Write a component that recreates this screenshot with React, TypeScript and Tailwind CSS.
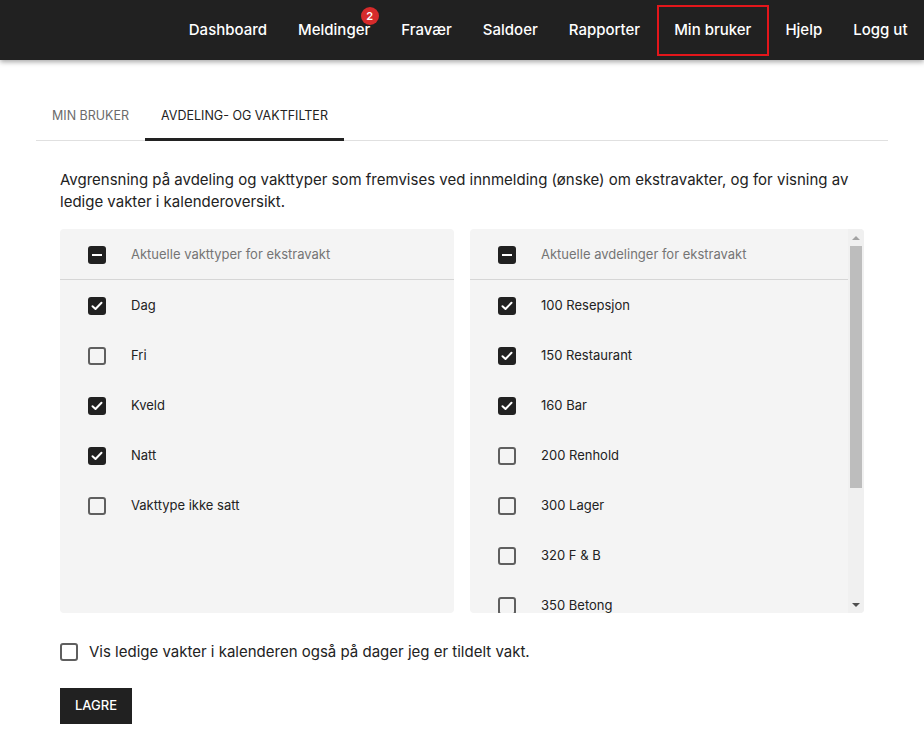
import React from 'react';

const navItems = ['Dashboard', 'Meldinger', 'Fravær', 'Saldoer', 'Rapporter', 'Min bruker', 'Hjelp', 'Logg ut'];

const vakttyper = [
  { label: 'Dag', checked: true },
  { label: 'Fri', checked: false },
  { label: 'Kveld', checked: true },
  { label: 'Natt', checked: true },
  { label: 'Vakttype ikke satt', checked: false },
];

const avdelinger = [
  { label: '100 Resepsjon', checked: true },
  { label: '150 Restaurant', checked: true },
  { label: '160 Bar', checked: true },
  { label: '200 Renhold', checked: false },
  { label: '300 Lager', checked: false },
  { label: '320 F & B', checked: false },
  { label: '350 Betong', checked: false },
  { label: '400 Vedlikehold', checked: false },
  { label: '500 Administrasjon', checked: false },
  { label: '600 Konferanse', checked: false },
];

function Checkbox({ state, white }: { state: 'checked' | 'unchecked' | 'indeterminate'; white?: boolean }) {
  if (state === 'unchecked') {
    return <span className={`block w-[18px] h-[18px] rounded-[3px] border-2 border-[#5f5f5f] shrink-0 ${white ? 'bg-white' : ''}`} />;
  }
  return (
    <span className="flex items-center justify-center w-[18px] h-[18px] rounded-[3px] bg-[#212121] shrink-0">
      {state === 'checked' ? (
        <svg width="12" height="10" viewBox="0 0 12 10" fill="none">
          <path d="M1.5 5.2 L4.5 8 L10.5 1.8" stroke="white" strokeWidth="2" strokeLinecap="round" strokeLinejoin="round" />
        </svg>
      ) : (
        <span className="block w-[10px] h-[2px] bg-white" />
      )}
    </span>
  );
}

function FilterList({ title, items }: { title: string; items: { label: string; checked: boolean }[] }) {
  return (
    <div>
      <div className="flex items-center h-[51px] pt-[2px] pl-7 gap-[25px] border-b border-[#d6d6d6]">
        <Checkbox state="indeterminate" />
        <span className="text-[13px] text-[#757575]">{title}</span>
      </div>
      <div>
        {items.map(item => (
          <div key={item.label} className="flex items-center h-[50px] pt-[2px] pl-7 gap-[25px]">
            <Checkbox state={item.checked ? 'checked' : 'unchecked'} />
            <span className="text-[13px] text-[#222]">{item.label}</span>
          </div>
        ))}
      </div>
    </div>
  );
}

export default function App() {
  return (
    <div className="min-h-[752px] bg-white text-[#222]" style={{ fontFamily: 'Inter, "Noto Sans", sans-serif' }}>
      {/* Top navigation */}
      <header className="h-[60px] bg-[#212121] shadow-[0_2px_5px_rgba(0,0,0,0.35)] flex items-center justify-end pr-[1px]">
        <nav className="flex items-center h-full">
          {navItems.map(item => {
            const active = item === 'Min bruker';
            return (
              <div key={item} className="relative h-full flex items-center">
                <span
                  className={`text-[15px] font-medium text-white px-[15.5px] h-[51px] flex items-center ${active ? 'border-2 border-[#e3161b] mx-[1px]' : ''}`}
                >
                  {item}
                </span>
                {item === 'Meldinger' && (
                  <span className="absolute top-[7px] right-[7px] w-[18px] h-[18px] rounded-full bg-[#d62b2b] text-white text-[11px] font-semibold flex items-center justify-center">
                    2
                  </span>
                )}
              </div>
            );
          })}
        </nav>
      </header>

      <main className="px-9 pt-[37px]">
        {/* Tabs */}
        <div className="flex border-b border-[#e0e0e0] h-[44px]">
          <div className="px-4 flex items-center pb-[4px] text-[12.5px] text-[#6b6b6b]">MIN BRUKER</div>
          <div className="px-4 flex items-center pb-[2px] text-[12.5px] text-[#222] border-b-[3px] border-[#222] -mb-[1px]">
            AVDELING- OG VAKTFILTER
          </div>
        </div>

        <div className="px-6">
          <p className="mt-[28px] text-[15px] leading-[22px] text-[#222]">
            Avgrensning på avdeling og vakttyper som fremvises ved innmelding (ønske) om ekstravakter, og for visning av ledige vakter i kalenderoversikt.
          </p>

          <div className="grid grid-cols-2 gap-4 mt-[16px]">
            <div className="bg-[#f4f4f4] rounded h-[384px]">
              <FilterList title="Aktuelle vakttyper for ekstravakt" items={vakttyper} />
            </div>
            <div className="bg-[#f4f4f4] rounded h-[384px] flex overflow-hidden">
              <div className="flex-1 overflow-hidden">
                <FilterList title="Aktuelle avdelinger for ekstravakt" items={avdelinger} />
              </div>
              {/* Scrollbar */}
              <div className="w-[16px] bg-[#f0f0f0] flex flex-col items-center">
                <div className="h-[17px] flex items-center justify-center">
                  <span className="block w-0 h-0 border-l-[4px] border-r-[4px] border-b-[4px] border-l-transparent border-r-transparent border-b-[#a3a3a3]" />
                </div>
                <div className="w-[12px] h-[242px] bg-[#bdbdbd]" />
                <div className="flex-1" />
                <div className="h-[17px] flex items-center justify-center">
                  <span className="block w-0 h-0 border-l-[4px] border-r-[4px] border-t-[4px] border-l-transparent border-r-transparent border-t-[#505050]" />
                </div>
              </div>
            </div>
          </div>

          <div className="flex items-center gap-[11px] mt-[28px] h-[22px]">
            <Checkbox state="unchecked" white />
            <span className="text-[15px] text-[#222]">Vis ledige vakter i kalenderen også på dager jeg er tildelt vakt.</span>
          </div>

          <button className="mt-[25px] h-[36px] px-[15px] bg-[#212121] text-white text-[13px] font-medium">
            LAGRE
          </button>
        </div>
      </main>
    </div>
  );
}
